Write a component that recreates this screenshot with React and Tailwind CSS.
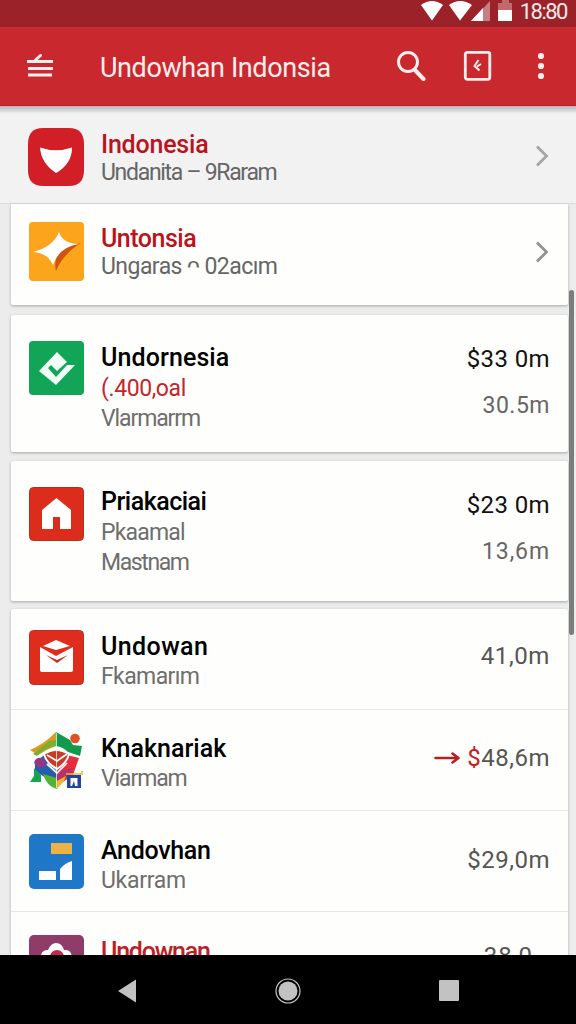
import React from 'react'

const reports = [
  {
    name: 'Undornesia',
    nameStyle: 'tracking-[0.1px]',
    lines: [
      { text: '(.400,oal', style: 'text-[#c4262c] tracking-[-0.4px]' },
      { text: 'Vlarmarrm', style: 'text-[#6e6e6e] tracking-[-1.1px]' },
    ],
    amount: '$33 0m',
    sub: '30.5m',
    subStyle: 'tracking-[0.5px]',
    card: 'mt-[10px] h-[137px]',
    textBox: 'mt-[1px]',
    logo: <CheckLogo />,
  },
  {
    name: 'Priakaciai',
    nameStyle: 'tracking-[-0.5px]',
    lines: [
      { text: 'Pkaamal', style: 'text-[#6e6e6e] tracking-[-0.8px]' },
      { text: 'Mastnam', style: 'text-[#6e6e6e] tracking-[-1.4px]' },
    ],
    amount: '$23 0m',
    sub: '13,6m',
    subStyle: 'tracking-[0.9px]',
    card: 'mt-[9px] h-[140px]',
    textBox: 'mt-[-1px]',
    logo: <HomeLogo />,
  },
];

export default function App() {
  return (
    <div className="flex h-[1024px] w-[576px] flex-col overflow-hidden bg-[#ececec] font-['Roboto',sans-serif]">
      <StatusBar />
      <AppBar />
      <main className="relative min-h-0 flex-1 overflow-hidden">
        <section className="flex h-[98px] items-start border-b border-[#dcdcdc] bg-[#f2f2f2] pl-[28px]">
          <div className="mt-[22px]"><ShieldLogo /></div>
          <LinkText
            title="Indonesia"
            text="Undanita – 9Raram"
            box="pt-[24px]"
            titleStyle="tracking-[-0.2px]"
            textStyle="tracking-[-1.3px]"
          />
          <Chevron className="mt-[39px] mr-[27px] ml-auto text-[#a5a5a5]" />
        </section>

        <section className="ml-[11px] flex h-[101px] w-[557px] items-start rounded-b-[2px] bg-[#fefefc] pl-[18px] shadow-[0_1px_3px_rgba(0,0,0,0.3)]">
          <div className="mt-[18px]"><StarLogo /></div>
          <LinkText
            title="Untonsia"
            text="Ungaras ᴖ 02acım"
            box="pt-[20px]"
            titleStyle="tracking-[-0.5px]"
            textStyle="tracking-[-0.55px]"
          />
          <Chevron className="mt-[37px] mr-[19px] ml-auto text-[#929292]" />
        </section>

        {reports.map((r) => (
          <ReportCard key={r.name} {...r} />
        ))}

        <section className="mt-[8px] ml-[11px] w-[557px] rounded-[2px] bg-[#fefefc] shadow-[0_1px_3px_rgba(0,0,0,0.3)]">
          <Row logo={<MailLogo />} pad="pt-[21px]" name="Undowan" nameStyle="text-black tracking-[0.4px]" text="Fkamarım" textStyle="tracking-[-0.6px]">
            <span className="tracking-[0.6px]">41,0m</span>
          </Row>
          <Row logo={<MosaicLogo />} pad="pt-[22px]" name="Knaknariak" nameStyle="text-black tracking-[0px]" text="Viarmam" textStyle="tracking-[-1.1px]">
            <svg className="mr-[6px]" width="27" height="14" viewBox="0 0 27 14" fill="none" stroke="#b8201f" strokeWidth="2.6">
              <path d="M1.500 7H24M18.500 2.500L24.500 7L18.500 11.500" strokeLinecap="round" strokeLinejoin="round" />
            </svg>
            <span className="text-[#c4201f] tracking-[0.5px]">$</span>
            <span className="tracking-[0.5px]">48,6m</span>
          </Row>
          <Row logo={<BlocksLogo />} pad="pt-[23px]" name="Andovhan" nameStyle="text-black tracking-[-0.3px]" text="Ukarram" textStyle="tracking-[-0.3px]">
            <span className="tracking-[0.5px]">$29,0m</span>
          </Row>
          <Row logo={<FlowerLogo />} pad="pt-[23px]" name="Undownan" nameStyle="text-[#c01c24] tracking-[-1.2px]" text="" textStyle="">
            <span className="mt-[-5px] mr-[17px] tracking-[1px]">38,0</span>
          </Row>
        </section>

        <div className="absolute top-0 left-0 h-[8px] w-full bg-gradient-to-b from-black/25 to-transparent" />
        <div className="absolute top-[184px] right-[2px] h-[345px] w-[5px] rounded-full bg-[#7b7d7d]" />
      </main>
      <NavBar />
    </div>
  )
}

function StatusBar() {
  return (
    <div className="flex h-[27px] shrink-0 items-start justify-end bg-[#9b2228] pr-[9px]">
      <svg className="h-[27px] w-[96px]" viewBox="0 0 96 27" fill="#fff">
        <path d="M1 5Q12 -3 23 5L12 20.500Z" />
        <path d="M29 5Q40 -3 52 5L40 20.500Z" />
        <path d="M51 21L70 1V21Z" fill="#c57f80" />
        <path d="M51 21L63 8V21Z" />
        <path d="M78 3H82V0H89V3H92V21H78Z" fill="#c06a6d" />
        <path d="M78 10H92V21H78Z" />
      </svg>
      <span className="ml-[4px] text-[22px] leading-[24px] tracking-[-1.5px] text-[#fbeaea]">18:80</span>
    </div>
  )
}

function AppBar() {
  return (
    <header className="relative flex h-[79px] shrink-0 items-center border-b border-[#b3252c] bg-[#c9282f] text-[#fdeeee]">
      <svg className="ml-[26px]" width="28" height="26" viewBox="0 0 28 26" stroke="currentColor" strokeWidth="2.800" fill="none">
        <path d="M1 8.500H27M2 15.500H27M2 22H26" />
        <path d="M9.500 7L14.500 2.500" strokeWidth="3" strokeLinecap="round" />
      </svg>
      <h1 className="mt-[3px] ml-[46px] text-[27px] leading-[32px] tracking-[-0.4px] whitespace-nowrap">Undowhan Indonsia</h1>
      <div className="ml-auto flex items-center pr-[30px]">
        <svg className="mr-[37px]" width="30" height="32" viewBox="0 0 30 32" fill="none" stroke="currentColor">
          <circle cx="12" cy="12" r="9.500" strokeWidth="3" />
          <path d="M18.500 19.500L27.500 29" strokeWidth="4" strokeLinecap="round" />
        </svg>
        <svg className="mr-[44px]" width="29" height="32" viewBox="0 0 29 32" fill="none" stroke="currentColor">
          <rect x="2.300" y="2.300" width="24.500" height="27" rx="2" strokeWidth="2.800" />
          <path d="M15.500 10L11.500 16L16.500 20.500M14 16.500L18 14" strokeWidth="2" />
        </svg>
        <svg width="10" height="28" viewBox="0 0 10 28" fill="currentColor">
          <circle cx="5" cy="4" r="3.100" />
          <circle cx="5" cy="14" r="3.100" />
          <circle cx="5" cy="24" r="3.100" />
        </svg>
      </div>
    </header>
  )
}

function LinkText({ title, text, box, titleStyle, textStyle }) {
  return (
    <div className={`ml-[17px] whitespace-nowrap ${box}`}>
      <h2 className={`text-[25px] leading-[29px] font-medium text-[#b9141c] ${titleStyle}`}>{title}</h2>
      <p className={`text-[23px] leading-[28px] text-[#666] ${textStyle}`}>{text}</p>
    </div>
  )
}

function ReportCard({ name, nameStyle, lines, amount, sub, subStyle, card, textBox, logo }) {
  return (
    <section className={`ml-[11px] flex w-[557px] items-start rounded-[2px] bg-[#fefefc] pt-[26px] pr-[18px] pl-[18px] shadow-[0_1px_3px_rgba(0,0,0,0.3)] ${card}`}>
      {logo}
      <div className={`ml-[17px] whitespace-nowrap ${textBox}`}>
        <h2 className={`text-[25px] leading-[32px] font-medium text-black ${nameStyle}`}>{name}</h2>
        {lines.map((line) => (
          <p key={line.text} className={`text-[23px] leading-[30px] ${line.style}`}>{line.text}</p>
        ))}
      </div>
      <div className="ml-auto text-right whitespace-nowrap">
        <p className="text-[24px] leading-[36px] tracking-[0.4px] text-[#111]">{amount}</p>
        <p className={`mt-[13px] text-[23px] leading-[32px] text-[#666] ${subStyle}`}>{sub}</p>
      </div>
    </section>
  )
}

function Row({ logo, pad, name, nameStyle, text, textStyle, children }) {
  return (
    <div className={`flex h-[101px] items-start border-b border-[#e6e6e4] pr-[18px] pl-[18px] ${pad}`}>
      {logo}
      <div className="mt-[1px] ml-[17px] whitespace-nowrap">
        <h2 className={`text-[25px] leading-[32px] font-medium ${nameStyle}`}>{name}</h2>
        <p className={`text-[23px] leading-[27px] text-[#6e6e6e] ${textStyle}`}>{text}</p>
      </div>
      <div className="mt-[10px] ml-auto flex items-center text-[24px] leading-[32px] text-[#555]">{children}</div>
    </div>
  )
}

function Chevron({ className }) {
  return (
    <svg className={className} width="14" height="22" viewBox="0 0 14 22" fill="none" stroke="currentColor" strokeWidth="2.800">
      <path d="M2 1.500L11.500 11L2 20.500" />
    </svg>
  )
}

function ShieldLogo() {
  return (
    <svg width="56" height="58" viewBox="0 0 56 58">
      <path d="M15 0H41Q56 0 56 16V42Q56 58 41 58H15Q0 58 0 42V16Q0 0 15 0Z" fill="#d21e26" />
      <path d="M12 19.500Q28 25 44 19.500Q44 36 28 45Q13 35 12 19.500Z" fill="#fff" />
    </svg>
  )
}

function StarLogo() {
  return (
    <svg width="55" height="59" viewBox="0 0 55 59">
      <rect width="55" height="59" rx="4" fill="#fca41c" />
      <path d="M27 49Q22 26 52 21Q34 32 27 49Z" fill="#cf5410" />
      <path d="M30 10Q34 22 50 22Q30 25 24 43Q19 31 4 30Q24 25 30 10Z" fill="#fff" />
    </svg>
  )
}

function CheckLogo() {
  return (
    <svg width="55" height="54" viewBox="0 0 55 54">
      <rect width="55" height="54" rx="4" fill="#12a558" />
      <path d="M10 30L28 11L38 21L28 30L22 24L19 27L27 36L38 24H46L27 44Z" fill="#f0fff6" />
    </svg>
  )
}

function HomeLogo() {
  return (
    <svg width="55" height="54" viewBox="0 0 55 54">
      <rect x="0.500" y="0.500" width="54" height="53" rx="4" fill="#db2c1c" stroke="#bd2b20" />
      <path d="M27.500 11L42 23V42H31V30H24V42H13V23Z" fill="#fff" />
    </svg>
  )
}

function MailLogo() {
  return (
    <svg width="55" height="55" viewBox="0 0 55 55">
      <rect x="0.500" y="0.500" width="54" height="54" rx="4" fill="#df2d1d" stroke="#bf2c22" />
      <path d="M11 17L27 26L44 17V40Q44 42 42 42H13Q11 42 11 40Z" fill="#fff" />
      <path d="M14 16L27 10L41 16L27 20Z" fill="#fff" />
      <path d="M17 25L28 30L39 25L28 33Z" fill="#c72d22" />
    </svg>
  )
}

function MosaicLogo() {
  return (
    <svg width="55" height="58" viewBox="0 0 55 58">
      <path d="M1 18Q15 12 27 0V14Q18 17 9 23Z" fill="#dc9a20" />
      <path d="M4 22L20 9L27 8V14Q18 15 8 24Z" fill="#7eae2f" />
      <path d="M27 0L41 8L44 13L53 14L51 24L39 20Q34 15 27 14Z" fill="#12994a" />
      <circle cx="46" cy="6.500" r="4.800" fill="#dd5227" />
      <path d="M6 31L15 23L28 37V50Q14 46 6 38Z" fill="#255cae" />
      <path d="M5 31Q6 25 14 26L18 33L10 36Z" fill="#963486" />
      <path d="M50 26L38 23L28 38V54L44 43Z" fill="#e52f3d" />
      <path d="M28 39L45 36L36 48L28 54Z" fill="#b93168" />
      <path d="M5 36L12 43V50L1 50L5 44Z" fill="#18a253" />
      <path d="M14 42L28 46V57Q18 55 14 42Z" fill="#53b336" />
      <path d="M28 49L37 44L35 49L28 57Z" fill="#edb827" />
      <path d="M15 22Q27 14 40 22Q38 31 28 37Q17 31 15 22Z" fill="#c93b25" stroke="#fff" strokeWidth="2" />
      <path d="M18 23L28 29L38 22M18 32L28 41L38 31" fill="none" stroke="#fff" strokeWidth="1.700" />
      <path d="M27.500 1V56" stroke="#fff" strokeWidth="0.700" />
      <path d="M37 42H53V39" fill="none" stroke="#edb827" strokeWidth="1.500" />
      <rect x="38" y="43" width="14" height="13" fill="#23449b" />
      <path d="M41.500 54V46H48.500V54H46L45 49L43 54Z" fill="#fff" />
    </svg>
  )
}

function BlocksLogo() {
  return (
    <svg width="55" height="55" viewBox="0 0 55 55">
      <rect width="55" height="55" rx="5" fill="#1f77c7" />
      <path d="M22 9H43V20H22Z" fill="#efb143" />
      <path d="M10 37H27V46H10ZM31 46V35Q36 29 43 27V46Z" fill="#fff" />
    </svg>
  )
}

function FlowerLogo() {
  return (
    <svg width="55" height="55" viewBox="0 0 55 55">
      <rect width="55" height="55" rx="5" fill="#8f3c69" />
      <path d="M12 24Q11 15 19 15Q22 8 27 8Q33 8 35 15Q43 14 43 24L37 38H17Z" fill="#fff" />
      <circle cx="28" cy="22" r="7" fill="#c6284c" />
    </svg>
  )
}

function NavBar() {
  return (
    <nav className="h-[69px] shrink-0 bg-black">
      <div className="flex h-full items-center pt-[2px] pl-[118px]">
        <svg width="19" height="24" viewBox="0 0 19 24" fill="#c2c2c2">
          <path d="M0 12L18 0.500V23.500Z" />
        </svg>
        <svg className="ml-[138px]" width="26" height="26" viewBox="0 0 26 26" fill="#c2c2c2">
          <circle cx="13" cy="13" r="9.500" />
          <circle cx="13" cy="13" r="12" fill="none" stroke="#c2c2c2" strokeWidth="1.200" />
        </svg>
        <div className="ml-[138px] h-[21px] w-[20px] rounded-[1px] bg-[#c2c2c2]" />
      </div>
    </nav>
  )
}
